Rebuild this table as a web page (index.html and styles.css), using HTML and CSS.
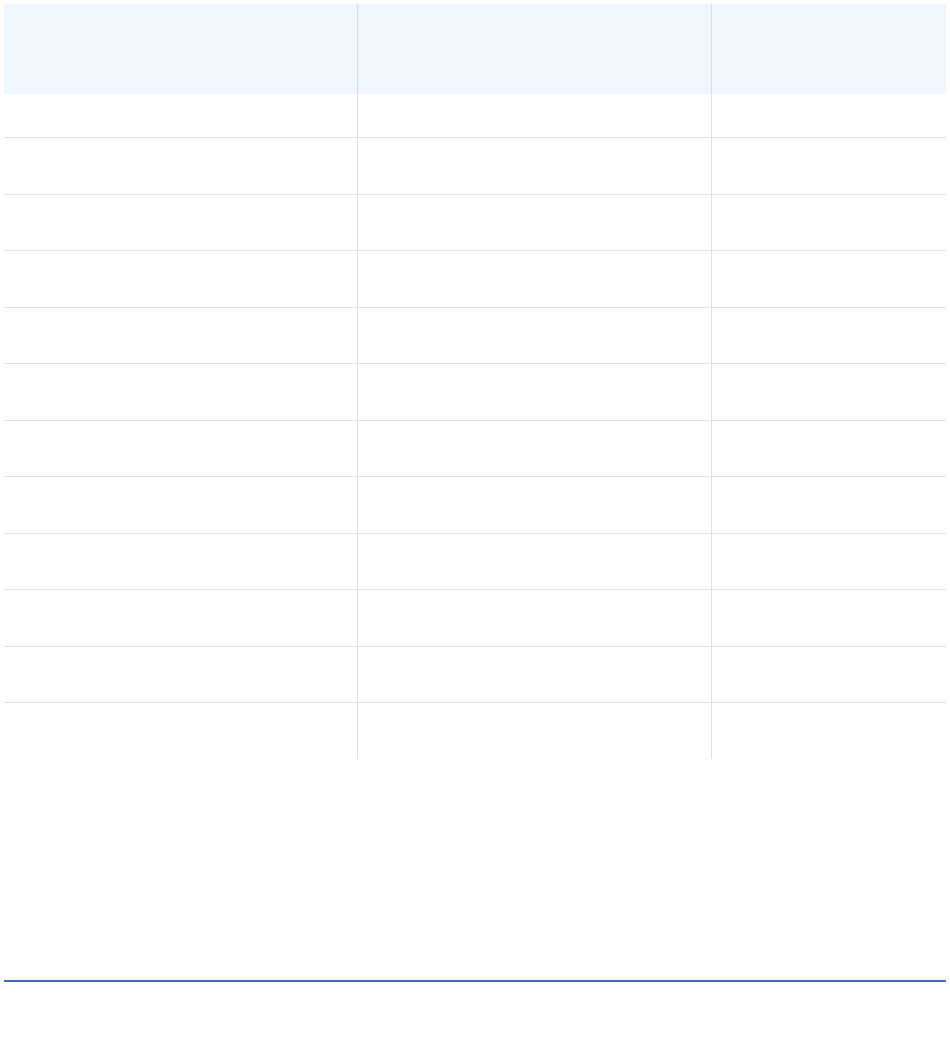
FILE: index.html
```html
<!DOCTYPE html>
<html>
  <head>
    <meta name="viewport" content="width=device-width, initial-scale=1" />
    <title>Sheet</title>
    <link rel="stylesheet" href="styles.css">
  </head>

  <body>
    <section class="sheet">
      <div class="row head">
        <div class="cell"></div>
        <div class="cell"></div>
        <div class="cell"></div>
      </div>
      <div class="row first">
        <div class="cell"></div>
        <div class="cell"></div>
        <div class="cell"></div>
      </div>
      <div class="row">
        <div class="cell"></div>
        <div class="cell"></div>
        <div class="cell"></div>
      </div>
      <div class="row">
        <div class="cell"></div>
        <div class="cell"></div>
        <div class="cell"></div>
      </div>
      <div class="row">
        <div class="cell"></div>
        <div class="cell"></div>
        <div class="cell"></div>
      </div>
      <div class="row">
        <div class="cell"></div>
        <div class="cell"></div>
        <div class="cell"></div>
      </div>
      <div class="row">
        <div class="cell"></div>
        <div class="cell"></div>
        <div class="cell"></div>
      </div>
      <div class="row">
        <div class="cell"></div>
        <div class="cell"></div>
        <div class="cell"></div>
      </div>
      <div class="row">
        <div class="cell"></div>
        <div class="cell"></div>
        <div class="cell"></div>
      </div>
      <div class="row">
        <div class="cell"></div>
        <div class="cell"></div>
        <div class="cell"></div>
      </div>
      <div class="row">
        <div class="cell"></div>
        <div class="cell"></div>
        <div class="cell"></div>
      </div>
      <div class="row">
        <div class="cell"></div>
        <div class="cell"></div>
        <div class="cell"></div>
      </div>
      <div class="row last">
        <div class="cell"></div>
        <div class="cell"></div>
        <div class="cell"></div>
      </div>
    </section>

    <footer class="foot"></footer>
  </body>
</html>
```

FILE: styles.css
```css
/* ------------------------------ reset ------------------------------ */
* {
  margin: 0;
  padding: 0;
  box-sizing: border-box;
}

body {
  margin: 4px;
  font-family: "Liberation Sans", Arial, sans-serif;
  background: #fff;
}

/* ------------------------------ sheet ------------------------------ */
.sheet {
  display: flex;
  flex-direction: column;
}

.row {
  display: grid;
  grid-template-columns: 3fr 3fr 2fr;
  height: 56.5px;
  border-bottom: 1px solid #e2e2de;
}

.row.head {
  height: 90px;
  background: #f0f6fe;
  border-bottom: 0;
}

.row.first {
  height: 44px;
}

.row.last {
  height: 55.5px;
  border-bottom: 0;
}

.cell + .cell {
  border-left: 1px solid #e0e0e0;
}

/* ------------------------------ footer ------------------------------ */
.foot {
  margin-top: 221.5px;
  border-top: 2px solid #4068a8;
}
```
